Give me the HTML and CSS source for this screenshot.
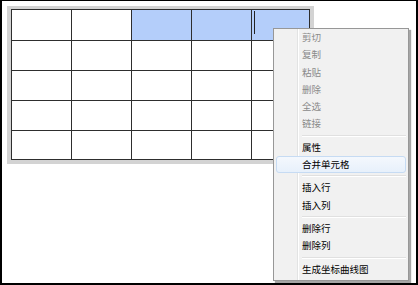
FILE: index.html
```html
<!DOCTYPE html>
<html>
<head>
  <title>表格编辑</title>
  <link rel="stylesheet" href="styles.css">
</head>
<body>

<div class="screen">
  <div class="table-frame">
    <table class="grid">
      <tr class="first">
        <td></td><td></td><td class="sel"></td><td class="sel"></td><td class="sel"><span class="caret"></span></td>
      </tr>
      <tr><td></td><td></td><td></td><td></td><td></td></tr>
      <tr><td></td><td></td><td></td><td></td><td></td></tr>
      <tr><td></td><td></td><td></td><td></td><td></td></tr>
      <tr class="last"><td></td><td></td><td></td><td></td><td></td></tr>
    </table>
  </div>

  <ul class="context-menu">
    <li class="disabled">剪切</li>
    <li class="disabled">复制</li>
    <li class="disabled">粘贴</li>
    <li class="disabled">删除</li>
    <li class="disabled">全选</li>
    <li class="disabled">链接</li>
    <li class="sep"></li>
    <li>属性</li>
    <li class="hover">合并单元格</li>
    <li class="sep"></li>
    <li>插入行</li>
    <li>插入列</li>
    <li class="sep"></li>
    <li>删除行</li>
    <li>删除列</li>
    <li class="sep"></li>
    <li>生成坐标曲线图</li>
  </ul>
</div>

</body>
</html>
```

FILE: styles.css
```css
body {
  margin: 0;
  background-color: #fff;
  font-family: "Noto Sans CJK SC", "Noto Sans", sans-serif;
}

.screen {
  position: relative;
  width: 414px;
  height: 282px;
  border: 2px solid #000;
  border-top-width: 1px;
  background-color: #fff;
}

.table-frame {
  display: inline-block;
  margin: 5px 0 0 5px;
  border: 4px solid #d3d3d3;
  border-top-width: 3px;
}

.grid {
  border-collapse: collapse;
  background-color: #fff;
}

.grid td {
  border: 1px solid #2e2e2e;
  width: 59px;
  height: 29px;
  padding: 0;
  position: relative;
}

.grid td:last-child {
  width: 57px;
}

.grid tr.first td {
  height: 30px;
}

.grid tr.last td {
  height: 28px;
}

.grid td.sel {
  background-color: #b4cefa;
}

.caret {
  position: absolute;
  left: 2px;
  top: 1px;
  width: 1px;
  height: 23px;
  background-color: #222;
}

.context-menu {
  position: absolute;
  left: 271px;
  top: 27px;
  width: 130px;
  margin: 0;
  padding: 0 2px 2px;
  list-style: none;
  background-color: #f1f1f1;
  border: 1px solid #979797;
  box-shadow: 2px 2px 1px rgba(0, 0, 0, 0.35);
  background-image: linear-gradient(to right, transparent 23px, #e2e3e3 23px, #e2e3e3 24px, #fff 24px, #fff 25px, transparent 25px);
  font-size: 9.5px;
}

.context-menu li {
  height: 17.3px;
  line-height: 17.3px;
  padding-left: 26px;
  color: #000;
}

.context-menu li.disabled {
  color: #8a8a8a;
}

.context-menu li.sep {
  height: 6px;
  margin-left: 26px;
  padding: 0;
  background-image: linear-gradient(to bottom, transparent 2px, #e0e0e0 2px, #e0e0e0 3px, #fff 3px, #fff 4px, transparent 4px);
}

.context-menu li.hover {
  border: 1px solid #c6dbf3;
  border-radius: 3px;
  background-image: linear-gradient(to bottom, #f4f8fd, #e7f0fb);
  height: 15.3px;
  line-height: 15.3px;
  padding-left: 25px;
}
```
